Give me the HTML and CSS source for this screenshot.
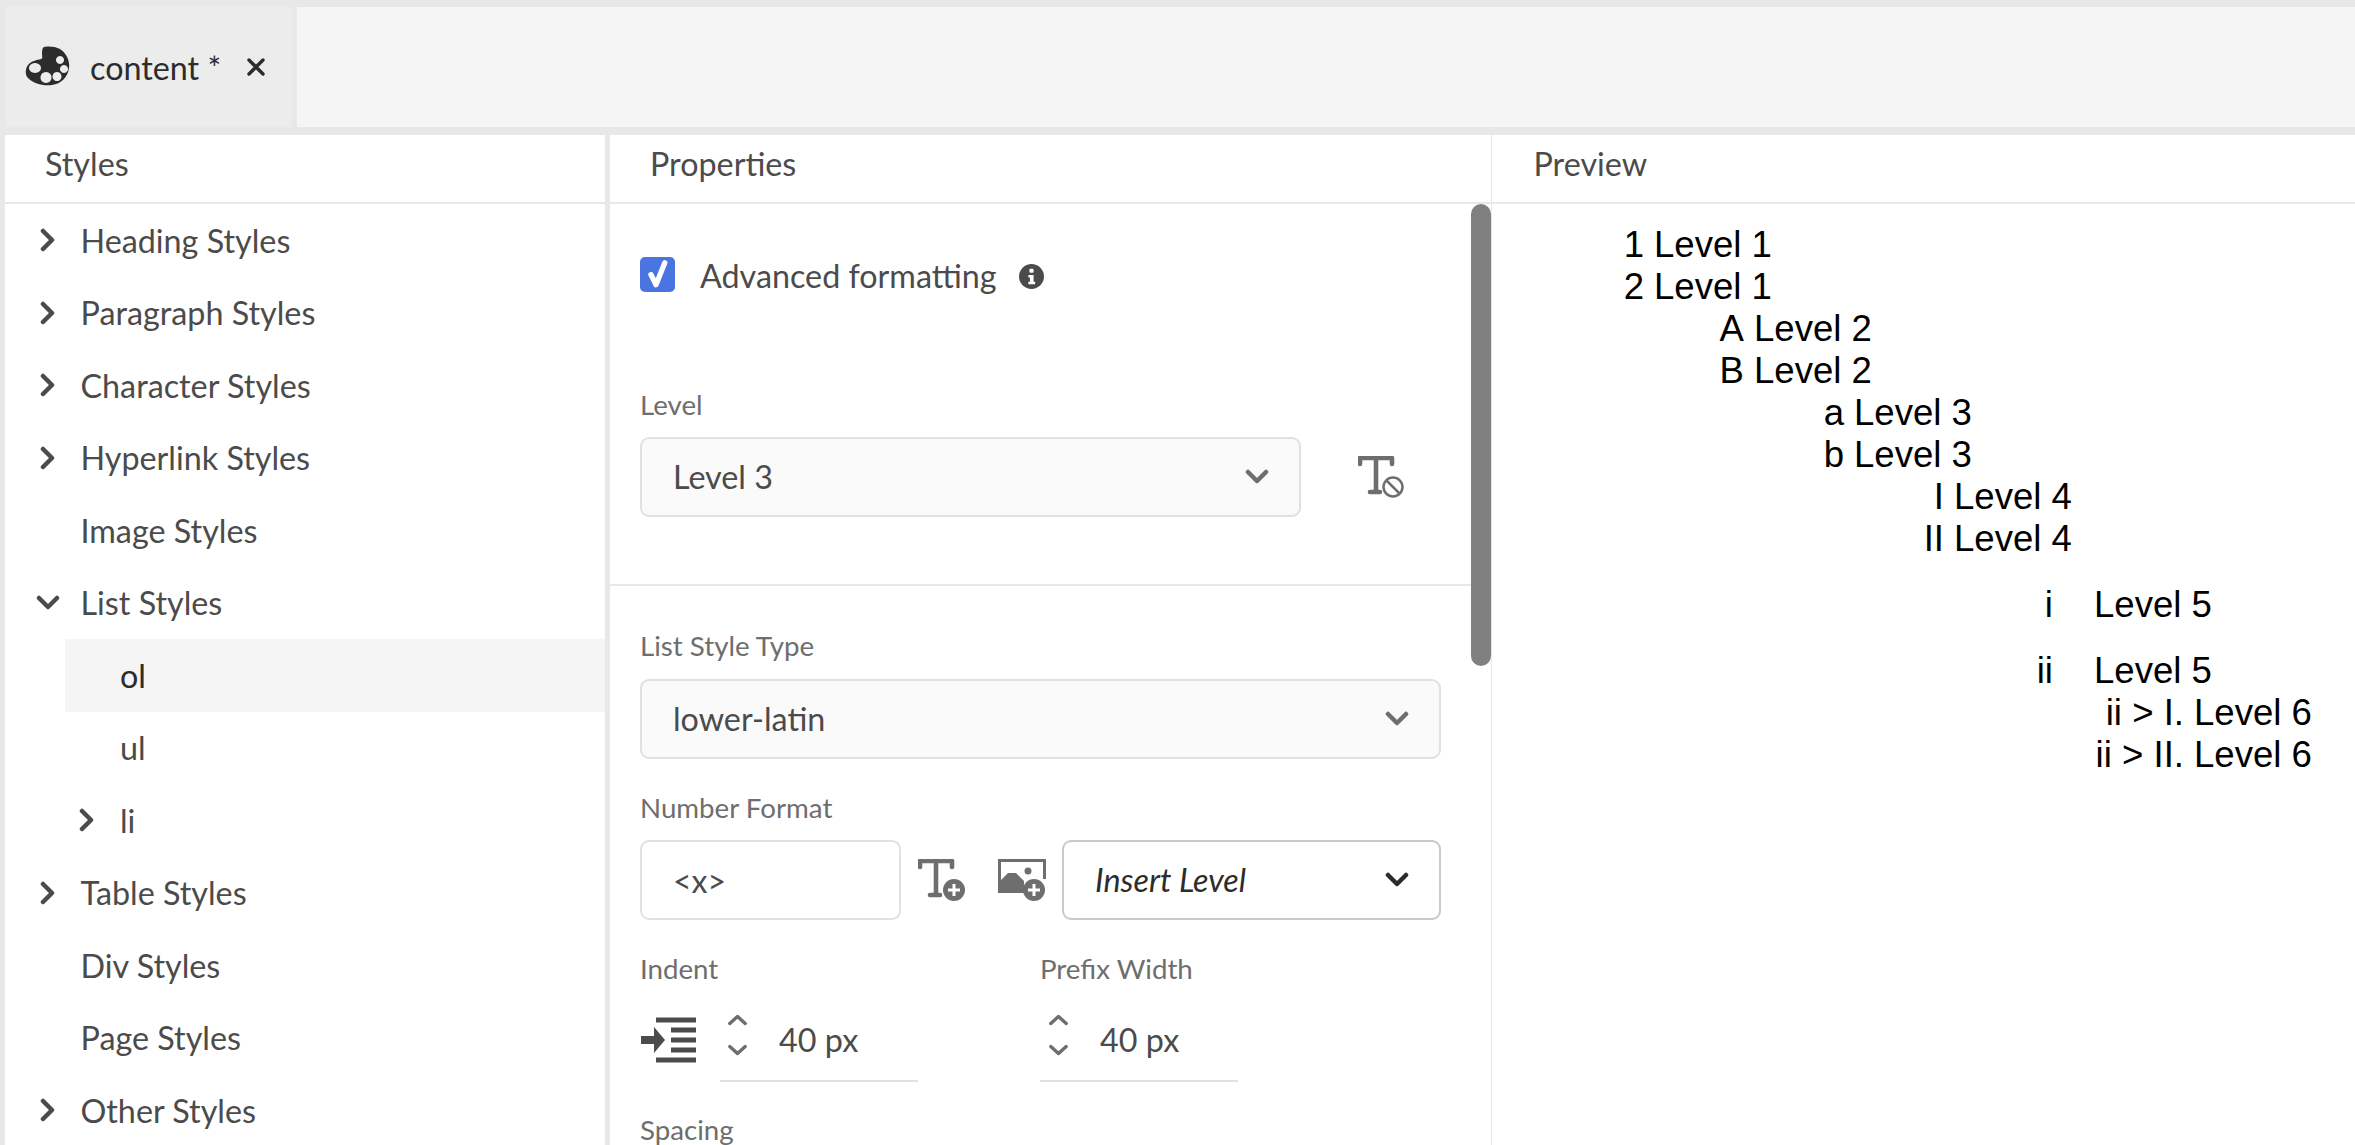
FILE: index.html
```html
<!DOCTYPE html>
<html lang="en">
<head>
<meta charset="utf-8">
<title>Template editor</title>
<link rel="stylesheet" href="styles.css">
</head>
<body>
<div class="tabbar">
  <div class="tab">
    <svg class="palette" viewBox="0 0 46 40"><path fill-rule="evenodd" fill="#2c2c2c" d="M19 1c3-1 11-1 16 2 6 4 10 11 9 19-1 9-8 16-17 17-9 1-18-1-24-7C0 29 0 23 3 19c3-4 9-5 13-6 2-1 1-3 1-5 0-3 0-6 2-7zM35 10a4 4 0 1 0 .01 0zM39 19a4 4 0 1 0 .01 0zM10 17a6 5 0 1 0 .01 0zM32 26a4.500 4.500 0 1 0 .01 0zM21 26a5.500 5.500 0 1 0 .01 0z"/></svg>
    <span class="tab-name">content *</span>
    <svg class="tab-close" viewBox="0 0 20 20"><path d="M3 3l14 14M17 3L3 17" stroke="#2c2c2c" stroke-width="3.400" stroke-linecap="round"/></svg>
  </div>
  <div class="tab-rest"></div>
</div>
<main class="panels">
  <section class="panel styles-panel">
    <h2 class="panel-title">Styles</h2>
    <ul class="tree">
      <li class="row"><svg class="chev" viewBox="0 0 16 24"><path d="M3 3l9 9-9 9"/></svg>Heading Styles</li>
      <li class="row"><svg class="chev" viewBox="0 0 16 24"><path d="M3 3l9 9-9 9"/></svg>Paragraph Styles</li>
      <li class="row"><svg class="chev" viewBox="0 0 16 24"><path d="M3 3l9 9-9 9"/></svg>Character Styles</li>
      <li class="row"><svg class="chev" viewBox="0 0 16 24"><path d="M3 3l9 9-9 9"/></svg>Hyperlink Styles</li>
      <li class="row"><span class="chev"></span>Image Styles</li>
      <li class="row"><svg class="chev chev-down" viewBox="0 0 24 16"><path d="M3 3l9 9 9-9"/></svg>List Styles</li>
      <li class="row sub selected">ol</li>
      <li class="row sub">ul</li>
      <li class="row sub"><svg class="chev sub-chev" viewBox="0 0 16 24"><path d="M3 3l9 9-9 9"/></svg>li</li>
      <li class="row"><svg class="chev" viewBox="0 0 16 24"><path d="M3 3l9 9-9 9"/></svg>Table Styles</li>
      <li class="row"><span class="chev"></span>Div Styles</li>
      <li class="row"><span class="chev"></span>Page Styles</li>
      <li class="row"><svg class="chev" viewBox="0 0 16 24"><path d="M3 3l9 9-9 9"/></svg>Other Styles</li>
    </ul>
  </section>
  <section class="panel props-panel">
    <h2 class="panel-title">Properties</h2>
    <div class="scrollbar"></div>
    <div class="props-top">
      <div class="check-row">
        <span class="checkbox"><svg viewBox="0 0 24 24"><path d="M7.500 12l3.500 7 6-15" fill="none" stroke="#fff" stroke-width="3.600" stroke-linecap="round" stroke-linejoin="round"/></svg></span>
        <span class="check-label">Advanced formatting</span>
        <svg class="info" viewBox="0 0 24 24"><circle cx="12" cy="12" r="12" fill="#4b4b4b"/><rect x="10" y="4.500" width="4" height="4" rx="1" fill="#fff"/><path d="M9 10.500h5V17h1.500v2.500h-6.500V17H10.500v-4H9z" fill="#fff"/></svg>
      </div>
      <label class="field-label level-label">Level</label>
      <div class="level-row">
        <div class="select level-select"><span>Level 3</span><svg class="sel-chev" viewBox="0 0 24 16"><path d="M3 3l9 9 9-9"/></svg></div>
        <svg class="t-clear" viewBox="0 0 46 42"><path d="M2 8V2h32v6M18 2v34M12 36h10" fill="none" stroke="#6e6e6e" stroke-width="4.600" stroke-linecap="round" stroke-linejoin="round"/><circle cx="35" cy="31" r="9.500" fill="#fff" stroke="#6e6e6e" stroke-width="2.500"/><path d="M29 25l12 12" stroke="#6e6e6e" stroke-width="2.500"/></svg>
      </div>
    </div>
    <div class="props-bottom">
      <label class="field-label">List Style Type</label>
      <div class="select type-select"><span>lower-latin</span><svg class="sel-chev" viewBox="0 0 24 16"><path d="M3 3l9 9 9-9"/></svg></div>
      <label class="field-label format-label">Number Format</label>
      <div class="format-row">
        <div class="input format-input">&lt;x&gt;</div>
        <svg class="fmt-icon fmt-t" viewBox="0 0 48 42"><path d="M2 8V2h32v6M18 2v34M12 36h10" fill="none" stroke="#6e6e6e" stroke-width="4.600" stroke-linecap="round" stroke-linejoin="round"/><circle cx="36" cy="31" r="11" fill="#6e6e6e"/><path d="M36 25v12M30 31h12" stroke="#fff" stroke-width="3"/></svg>
        <svg class="fmt-icon fmt-img" viewBox="0 0 48 42"><path d="M1.500 30V1.500h45V20" fill="none" stroke="#6e6e6e" stroke-width="3"/><path d="M0 34V24l10-10h8l8 8v12H0z" fill="#6e6e6e"/><circle cx="30" cy="12" r="3.500" fill="#6e6e6e"/><circle cx="36" cy="31" r="11" fill="#6e6e6e"/><path d="M36 25v12M30 31h12" stroke="#fff" stroke-width="3"/></svg>
        <div class="select insert-select"><em>Insert Level</em><svg class="sel-chev dark" viewBox="0 0 24 16"><path d="M3 3l9 9 9-9"/></svg></div>
      </div>
      <div class="num-grid">
        <div class="num-col">
          <label class="field-label">Indent</label>
          <div class="num-row">
            <svg class="indent-icon" viewBox="0 0 56 46"><path d="M16 3h40M31 13h25M31 23h25M31 33h25M16 43h40" stroke="#4b4b4b" stroke-width="5"/><path d="M1 19h13v-9l11 13-11 13v-9H1z" fill="#4b4b4b"/></svg>
            <div class="stepper"><svg viewBox="0 0 24 14"><path d="M3 11l9-8 9 8"/></svg><svg viewBox="0 0 24 14"><path d="M3 3l9 8 9-8"/></svg></div>
            <span class="num-value">40 px</span>
          </div>
        </div>
        <div class="num-col prefix-col">
          <label class="field-label">Prefix Width</label>
          <div class="num-row">
            <div class="stepper"><svg viewBox="0 0 24 14"><path d="M3 11l9-8 9 8"/></svg><svg viewBox="0 0 24 14"><path d="M3 3l9 8 9-8"/></svg></div>
            <span class="num-value">40 px</span>
          </div>
        </div>
      </div>
      <label class="field-label spacing-label">Spacing</label>
    </div>
  </section>
  <section class="panel preview-panel">
    <h2 class="panel-title">Preview</h2>
    <div class="preview">
      <div class="item l1"><span class="marker">1</span><span>Level 1</span></div>
      <div class="item l1"><span class="marker">2</span><span>Level 1</span></div>
      <div class="item l2"><span class="marker">A</span><span>Level 2</span></div>
      <div class="item l2"><span class="marker">B</span><span>Level 2</span></div>
      <div class="item l3"><span class="marker">a</span><span>Level 3</span></div>
      <div class="item l3"><span class="marker">b</span><span>Level 3</span></div>
      <div class="item l4"><span class="marker">I</span><span>Level 4</span></div>
      <div class="item l4"><span class="marker">II</span><span>Level 4</span></div>
      <div class="item l5"><span class="marker">i</span><span>Level 5</span></div>
      <div class="item l5"><span class="marker">ii</span><span>Level 5</span></div>
      <div class="item l6"><span class="marker">ii &gt; I.</span><span>Level 6</span></div>
      <div class="item l6"><span class="marker">ii &gt; II.</span><span>Level 6</span></div>
    </div>
  </section>
</main>
</body>
</html>
```
FILE: styles.css
```css
* { box-sizing: border-box; }
html, body { margin: 0; height: 100%; }
body {
  background: #e8e8e8;
  overflow: hidden;
  padding-top: 7px;
  font-family: "Lato", "Noto Sans", sans-serif;
  font-size: 32.3px;
  color: #4b4b4b;
}
.tabbar { display: flex; height: 120px; padding-left: 5px; gap: 5px; }
.tab {
  width: 287px;
  background: #ececec;
  display: flex;
  align-items: center;
  padding-left: 20px;
}
.palette { width: 46px; height: 40px; margin-top: -2px; }
.tab-name { margin-left: 19px; color: #2c2c2c; }
.tab-close { width: 20px; height: 20px; margin-left: 25px; }
.tab-rest { flex: 1; background: #f5f5f5; }
.panels { display: flex; gap: 5px; margin-top: 8px; padding-left: 5px; height: 1010px; }
.panel { background: #fff; position: relative; overflow: hidden; }
.styles-panel { width: 600px; }
.props-panel { width: 881px; }
.preview-panel { flex: 1; margin-left: -4px; }
.panel-title {
  margin: 0;
  height: 69px;
  padding: 0 0 10px 40px;
  display: flex;
  align-items: center;
  font-size: 32.3px;
  font-weight: 400;
  border-bottom: 2px solid #e8e8e8;
}
.preview-panel .panel-title { padding-left: 41.500px; }
.tree { list-style: none; margin: 0; padding: 0; }
.row { height: 72.5px; display: flex; align-items: center; padding-left: 35px; white-space: nowrap; }
.chev { width: 40.5px; flex: none; height: 24px; fill: none; stroke: #4b4b4b; stroke-width: 4.500; stroke-linecap: round; stroke-linejoin: round; }
svg.chev { width: 16px; margin-right: 24.5px; }
svg.chev-down { width: 24px; height: 16px; margin: 0 20.5px 0 -4px; }
.sub { margin-left: 60px; padding-left: 55px; }
.sub-chev { position: absolute; left: 74px; }
.selected { background: #f5f5f5; color: #2c2c2c; }
.scrollbar { position: absolute; right: 0; top: 69px; width: 20px; height: 462px; background: #808080; border-radius: 10px; }
.props-top { height: 382px; border-bottom: 2px solid #e8e8e8; padding: 53px 30px 0; }
.check-row { display: flex; align-items: center; height: 35px; }
.checkbox { width: 35px; height: 35px; background: #4a74e0; border-radius: 5px; display: flex; }
.checkbox svg { width: 35px; height: 35px; }
.check-label { margin-left: 25px; margin-top: 2px; }
.info { width: 25px; height: 25px; margin-left: 22px; margin-top: 3px; }
.field-label { display: block; font-size: 27.7px; color: #6e6e6e; line-height: 34px; }
.level-label { margin-top: 95.500px; }
.level-row { display: flex; align-items: center; margin-top: 15.500px; }
.select {
  height: 80px;
  border: 2px solid #e1e1e1;
  border-radius: 9px;
  background: #fafafa;
  display: flex;
  align-items: center;
  justify-content: space-between;
  padding: 0 30px 0 31px;
}
.select span, .select em { margin-top: -2px; }
.level-select { width: 661px; }
.sel-chev { width: 24px; height: 16px; fill: none; stroke: #6e6e6e; stroke-width: 4.500; stroke-linecap: round; stroke-linejoin: round; }
.sel-chev.dark { stroke: #2c2c2c; }
.t-clear { width: 46px; height: 42px; margin-left: 57px; }
.props-bottom { padding: 43px 30px 0; }
.type-select { width: 801px; margin-top: 16px; }
.format-label { margin-top: 32px; }
.format-row { display: flex; align-items: center; margin-top: 15px; }
.input {
  width: 261px;
  height: 80px;
  border: 2px solid #e1e1e1;
  border-radius: 9px;
  display: flex;
  align-items: center;
  padding-left: 31px;
  font-size: 32px;
}
.fmt-icon { width: 48px; height: 42px; }
.fmt-t { margin-left: 17px; }
.fmt-img { margin-left: 32px; }
.insert-select { width: 379px; margin-left: 16px; background: #fff; border-color: #c9c9c9; }
.insert-select em { color: #2c2c2c; }
.num-grid { display: flex; margin-top: 32px; }
.num-col { width: 400px; }
.num-row { display: flex; align-items: center; height: 72px; position: relative; margin-top: 16px; }
.num-row::after { content: ""; position: absolute; bottom: -8px; height: 2px; left: 80px; width: 198px; background: #e1e1e1; }
.prefix-col .num-row::after { left: 0; }
.indent-icon { width: 56px; height: 46px; margin-top: 3px; }
.stepper { display: flex; flex-direction: column; align-items: center; gap: 18px; width: 24px; margin-left: 29px; margin-top: -6px; }
.prefix-col .stepper { margin-left: 6px; }
.stepper svg { width: 21px; height: 12px; fill: none; stroke: #6e6e6e; stroke-width: 4; stroke-linecap: round; stroke-linejoin: round; }
.num-value { margin-left: 30px; margin-top: 2px; }
.spacing-label { margin-top: 39px; }
.preview { padding-top: 20px; font-family: "Liberation Sans", Arial, sans-serif; font-size: 36.6px; color: #000; }
.item { display: flex; height: 42px; line-height: 42px; white-space: nowrap; }
.marker { text-align: right; padding-right: 10px; flex: none; }
.l1 .marker { width: 162px; }
.l2 .marker { width: 262px; }
.l3 .marker { width: 362px; }
.l4 .marker { width: 462px; }
.l5 { height: 66px; padding-top: 24px; }
.l5 .marker { width: 602px; padding-right: 41px; }
.l6 .marker { width: 702px; }
```
